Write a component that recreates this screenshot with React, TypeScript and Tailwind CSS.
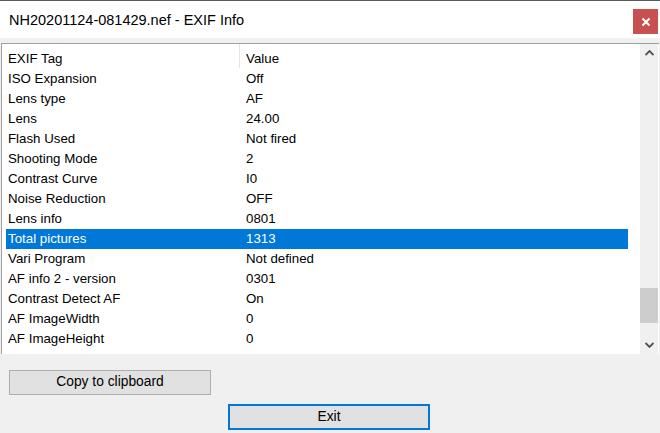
import React from "react";

const rows: [string, string][] = [
  ["ISO Expansion", "Off"],
  ["Lens type", "AF"],
  ["Lens", "24.00"],
  ["Flash Used", "Not fired"],
  ["Shooting Mode", "2"],
  ["Contrast Curve", "I0"],
  ["Noise Reduction", "OFF"],
  ["Lens info", "0801"],
  ["Total pictures", "1313"],
  ["Vari Program", "Not defined"],
  ["AF info 2 - version", "0301"],
  ["Contrast Detect AF", "On"],
  ["AF ImageWidth", "0"],
  ["AF ImageHeight", "0"],
];

export default function App() {
  return (
    <div
      className="w-[660px] h-[433px] bg-[#f0f0f0] border-t border-[#5a5a5a] flex flex-col overflow-hidden text-black"
      style={{ fontFamily: '"Liberation Sans", Arial, sans-serif' }}
    >
      <div className="h-[37px] bg-white flex items-start justify-between shrink-0">
        <div className="pl-[9px] pt-[10px] text-[14.5px] leading-[18px]">NH20201124-081429.nef - EXIF Info</div>
        <div className="mt-[8px] mr-[2px] w-[25px] h-[25px] bg-[#c75050] flex items-center justify-center">
          <svg width="10" height="10" viewBox="0 0 10 10">
            <path d="M1.5 1.5 L8.5 8.5 M8.5 1.5 L1.5 8.5" stroke="white" strokeWidth="2" />
          </svg>
        </div>
      </div>
      <div className="mt-[5px] ml-[1px] w-[658px] h-[311px] border-t border-l border-[#a0a0a0] bg-white flex shrink-0">
        <div className="flex-1 flex flex-col text-[13.3px]">
          <div className="h-[25px] flex items-stretch shrink-0">
            <div className="w-[238px] pl-[6px] pt-[5px] border-r border-[#e5e5e5] h-[24px]">EXIF Tag</div>
            <div className="pl-[6px] pt-[5px]">Value</div>
          </div>
          {rows.map(([k, v], i) => {
            const sel = i === 8;
            return (
              <div
                key={k}
                className={
                  "ml-[4px] w-[622px] h-[20px] flex items-center shrink-0 " +
                  (sel ? "bg-[#0078d7] text-white" : "")
                }
              >
                <div className="w-[240px] pl-[2px]">{k}</div>
                <div>{v}</div>
              </div>
            );
          })}
        </div>
        <div className="w-[18px] mr-[1px] bg-[#f0f0f0] flex flex-col shrink-0">
          <div className="h-[17px] flex items-center justify-center">
            <svg width="9" height="6" viewBox="0 0 9 6">
              <path d="M0.5 5 L4.5 1 L8.5 5" stroke="#505050" strokeWidth="1.8" fill="none" />
            </svg>
          </div>
          <div className="h-[227px]" />
          <div className="h-[35px] bg-[#cdcdcd]" />
          <div className="flex-1" />
          <div className="h-[18px] flex items-center justify-center">
            <svg width="9" height="6" viewBox="0 0 9 6">
              <path d="M0.5 1 L4.5 5 L8.5 1" stroke="#505050" strokeWidth="1.8" fill="none" />
            </svg>
          </div>
        </div>
      </div>
      <div className="mt-[16px] ml-[9px] w-[202px] h-[25px] bg-[#e1e1e1] border border-[#adadad] flex items-center justify-center text-[13.8px]">
        Copy to clipboard
      </div>
      <div className="mt-[9px] ml-[228px] w-[202px] h-[26px] bg-[#e1e1e1] border-2 border-[#0078d7] flex items-center justify-center text-[13.8px]">
        Exit
      </div>
    </div>
  );
}
